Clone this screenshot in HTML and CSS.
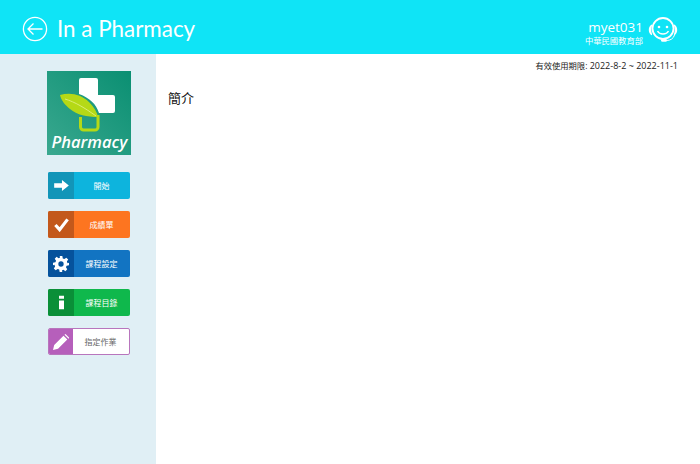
FILE: index.html
```html
<!DOCTYPE html>
<html lang="zh-Hant">
<head>
<meta charset="utf-8">
<title>In a Pharmacy</title>
<link rel="stylesheet" href="styles.css">
</head>
<body>
<header class="topbar">
  <div class="title-group">
    <svg class="back-icon" viewBox="0 0 26 26" width="26" height="26"><circle cx="13" cy="13" r="11.6" fill="none" stroke="#fff" stroke-width="1.3"/><path d="M20.5 13H6M11.5 7.500 6 13l5.500 5.500" fill="none" stroke="#fff" stroke-width="1.3"/></svg>
    <h1 class="title">In a Pharmacy</h1>
  </div>
  <div class="user">
    <div class="user-text">
      <div class="user-name">myet031</div>
      <div class="user-org">中華民國教育部</div>
    </div>
    <svg class="user-icon" viewBox="0 0 30 30" width="30" height="30">
      <circle cx="15" cy="13.500" r="10.500" fill="none" stroke="#fff" stroke-width="1.800"/>
      <path d="M3.500 9.500C1.500 11 .8 13 .8 15s1 4 2.700 5.200c.6-.2.7-.6.5-1.200-1-2.500-1-5.500 0-8.300.2-.6.100-1-.5-1.200zM26.500 9.500c2 1.500 2.700 3.500 2.700 5.500s-1 4-2.700 5.200c-.6-.2-.7-.6-.5-1.200 1-2.500 1-5.500 0-8.300-.2-.6-.1-1 .5-1.200z" fill="#fff"/>
      <circle cx="11" cy="12" r="1.300" fill="#fff"/>
      <circle cx="19" cy="12" r="1.300" fill="#fff"/>
      <path d="M9.500 16c2 4 9 4 11 0" fill="none" stroke="#fff" stroke-width="1.400"/>
      <path d="M26.500 20c-1 3.500-4 5.500-8 5.500" fill="none" stroke="#fff" stroke-width="1"/>
      <rect x="13" y="24" width="6" height="2.800" rx="1.400" fill="#fff"/>
    </svg>
  </div>
</header>
<div class="body-row">
  <aside class="sidebar">
    <svg class="logo" viewBox="0 0 84 84" width="84" height="84">
      <defs><linearGradient id="lg" x1="0" y1="1" x2="1" y2="0"><stop offset="0" stop-color="#3aa88f"/><stop offset="1" stop-color="#0a8f72"/></linearGradient></defs>
      <rect width="84" height="84" fill="url(#lg)"/>
      <path d="M32 9a2 2 0 0 1 2-2h15a2 2 0 0 1 2 2v15h15a2 2 0 0 1 2 2v14a2 2 0 0 1-2 2H52c-3-9-9-15-20-19z" fill="#fff"/>
      <path d="M13 24c10-3 21-1 29 7 5 5 8 10 9 15-11 0-21-2-28-8-5-4-9-9-10-14z" fill="#b5d916"/>
      <path d="M18 28c10 3 20 9 31 17" fill="none" stroke="#e3f28c" stroke-width=".8"/>
      <path d="M33.500 46v10a3 3 0 0 0 3 3h11.500a3 3 0 0 0 3-3V44" fill="none" stroke="#b5d916" stroke-width="3"/>
      <text class="logo-text" x="42.500" y="77" text-anchor="middle">Pharmacy</text>
    </svg>
    <nav class="menu">
      <a class="btn btn-start"><span class="btn-icon"><svg viewBox="0 0 16 12" width="15" height="11"><path d="M0 3.500h8.500V0L16 6l-7.500 6V8.500H0z" fill="#fff"/></svg></span><span class="btn-label">開始</span></a>
      <a class="btn btn-score"><span class="btn-icon"><svg viewBox="0 0 16 14" width="15" height="14"><path d="M1.500 7 6 12 14.500 1" fill="none" stroke="#fff" stroke-width="3.400"/></svg></span><span class="btn-label">成績單</span></a>
      <a class="btn btn-settings"><span class="btn-icon"><svg viewBox="0 0 24 24" width="16" height="16"><path fill="#fff" fill-rule="evenodd" d="M10 0h4l.7 3.600 2.300 1 3-2 2.800 2.800-2 3 1 2.300L24 10v4l-3.600.7-1 2.300 2 3-2.800 2.800-3-2-2.300 1L14 24h-4l-.7-3.600-2.300-1-3 2-2.800-2.800 2-3-1-2.300L0 14v-4l3.600-.7 1-2.300-2-3L5.400 1.200l3 2 2.300-1zM12 8a4 4 0 1 0 0 8 4 4 0 0 0 0-8z"/></svg></span><span class="btn-label">課程設定</span></a>
      <a class="btn btn-catalog"><span class="btn-icon"><svg viewBox="0 0 6 16" width="5" height="15"><path fill="#fff" d="M0 0h6v3.500H0zM0 5.500h6V16H0z"/></svg></span><span class="btn-label">課程目錄</span></a>
      <a class="btn btn-homework"><span class="btn-icon"><svg viewBox="0 0 16 16" width="16" height="16"><path fill="#fff" d="M0 16l1.200-5L10.500 1.700l3.800 3.800L5 14.800zM11.500.7l1-.7 3.800 3.800-.8 1z"/></svg></span><span class="btn-label">指定作業</span></a>
    </nav>
  </aside>
  <main class="content">
    <div class="validity"><span class="validity-label">有效使用期限:</span> 2022-8-2 ~ 2022-11-1</div>
    <h2 class="intro">簡介</h2>
  </main>
</div>
</body>
</html>
```
FILE: styles.css
```css
html, body { margin: 0; height: 100%; }
body { width: 700px; height: 464px; overflow: hidden; display: flex; flex-direction: column; background: #fff; font-family: "Open Sans", "Noto Sans CJK TC", sans-serif; }
.topbar { height: 54px; flex: none; box-sizing: border-box; padding-top: 4px; background: #0fe4f6; display: flex; justify-content: space-between; align-items: center; color: #fff; }
.title-group { display: flex; align-items: center; gap: 9px; padding-left: 22px; }
.back-icon { display: block; }
.title { margin: 0; font-family: Lato, sans-serif; font-weight: 400; font-size: 22.4px; line-height: 30px; }
.user { display: flex; align-items: center; gap: 5px; padding-right: 22px; padding-top: 2px; }
.user-text { text-align: right; padding-top: 2px; margin-top: 3px; }
.user-name { font-size: 13.5px; line-height: 16px; font-family: "Open Sans", sans-serif; }
.user-org { font-size: 8.300px; line-height: 11px; }
.user-icon { display: block; }
.body-row { flex: 1; display: flex; min-height: 0; }
.sidebar { width: 156px; flex: none; background: #e0eff5; display: flex; flex-direction: column; padding: 17px 0 0 47px; box-sizing: border-box; }
.logo { display: block; }
.logo-text { font-family: "Open Sans", sans-serif; font-style: italic; font-weight: 600; font-size: 16.500px; fill: #fff; }
.menu { display: flex; flex-direction: column; gap: 12px; margin: 17px 0 0 1px; width: 82px; }
.btn { display: flex; height: 27px; border-radius: 2px; overflow: hidden; box-sizing: border-box; color: #fff; font-size: 8px; }
.btn-icon { width: 26px; flex: none; display: flex; align-items: center; justify-content: center; }
.btn-label { flex: 1; display: flex; align-items: center; justify-content: center; padding-right: 1px; }
.btn-start { background: #0db4dd; }
.btn-start .btn-icon { background: #1295b8; }
.btn-score { background: #fd7520; }
.btn-score .btn-icon { background: #c3581b; }
.btn-settings { background: #1274c2; }
.btn-settings .btn-icon { background: #05529c; }
.btn-catalog { background: #0fb84c; }
.btn-catalog .btn-icon { background: #0a8f38; }
.btn-homework { background: #fff; border: 1px solid #b875bd; color: #666; }
.btn-homework .btn-icon { background: #b65fbb; width: 25px; margin: -1px 0 -1px -1px; }
.content { flex: 1; padding: 0 22px 0 12px; color: #222; }
.validity { text-align: right; font-size: 9px; line-height: 12px; padding-top: 6px; }
.validity-label { font-size: 8.300px; }
.intro { margin: 17px 0 0; font-size: 13px; font-weight: 400; line-height: 18px; color: #111; }
```
